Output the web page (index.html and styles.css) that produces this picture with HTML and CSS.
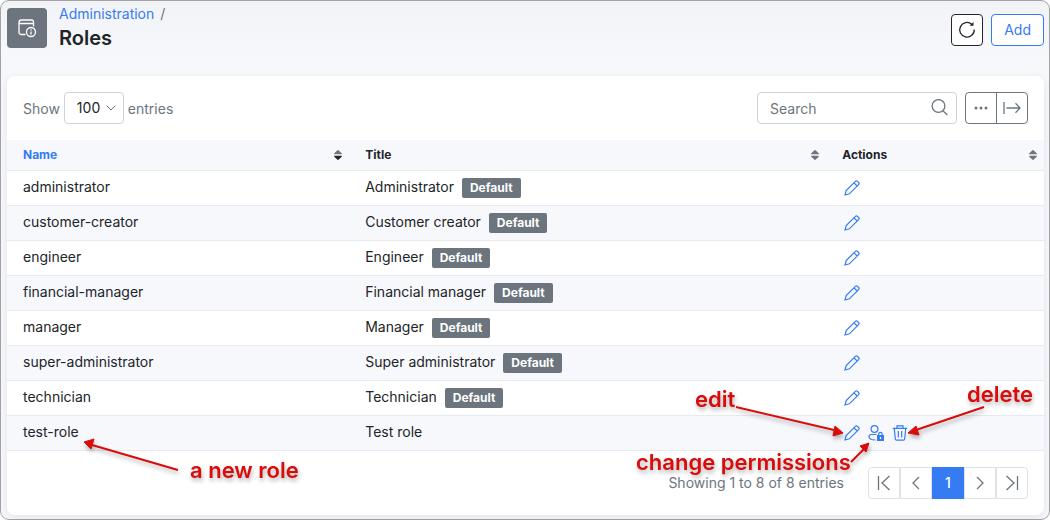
FILE: index.html
```html
<!DOCTYPE html>
<html lang="en">
<head>
  <meta charset="UTF-8" />
  <meta name="viewport" content="width=device-width, initial-scale=1" />
  <title>Roles</title>

  <link rel="stylesheet" href="styles.css">
</head>
<body>

  <!-- Shared icons -->
  <svg class="icon-defs" aria-hidden="true">
    <symbol id="icon-edit" viewBox="0 0 16 16">
      <path d="M1 15l1.200-4.400L11.400 1.400a1.500 1.500 0 0 1 2.100 0l1.100 1.100a1.500 1.500 0 0 1 0 2.100L5.400 13.800zM10 2.800l3.200 3.200" />
    </symbol>
    <symbol id="icon-sort" viewBox="0 0 8 10">
      <path class="sort-up" d="M.7 4.200a.5.500 0 0 1-.4-.9L3.200.5a1.100 1.100 0 0 1 1.600 0l2.900 2.800a.5.500 0 0 1-.4.9z" />
      <path class="sort-down" d="M.7 5.800a.5.500 0 0 0-.4.9l2.900 2.800a1.100 1.100 0 0 0 1.600 0l2.900-2.800a.5.500 0 0 0-.4-.9z" />
    </symbol>
  </svg>

  <div class="page">
    <header class="page-header">
      <div class="page-icon">
        <svg width="20" height="20" viewBox="0 0 20 20" aria-hidden="true">
          <path d="M8.500 16.500H4A2 2 0 0 1 2 14.500V4.500A2.500 2.500 0 0 1 4.500 2h10A2 2 0 0 1 16.500 4v4.500M2 5.500h14.500" />
          <circle cx="14" cy="14" r="4.500" />
          <path d="M14 13.500v3M14 11.300v1.200" />
        </svg>
      </div>
      <div class="page-heading">
        <nav class="breadcrumb" aria-label="Breadcrumb"><a href="#">Administration</a> <span>/</span></nav>
        <h1>Roles</h1>
      </div>
      <div class="header-actions">
        <button type="button" class="btn btn-refresh" aria-label="Refresh">
          <svg width="18" height="18" viewBox="0 0 18 18" aria-hidden="true">
            <path d="M13.700 3.200A7.300 7.300 0 1 0 16.300 8.500" />
            <path class="solid" d="M11.500 4.800h4V1z" />
          </svg>
        </button>
        <button type="button" class="btn btn-add">Add</button>
      </div>
    </header>

    <main class="card">
      <div class="toolbar">
        <div class="length">
          <label for="pageLength">Show</label>
          <div class="select-wrap">
            <select id="pageLength">
              <option>25</option>
              <option>50</option>
              <option selected>100</option>
            </select>
            <svg width="10" height="6" viewBox="0 0 10 6" aria-hidden="true"><path d="M.7.7L5 5 9.300.7" /></svg>
          </div>
          <span>entries</span>
        </div>
        <div class="tools">
          <div class="search">
            <input type="text" placeholder="Search" aria-label="Search" />
            <svg width="17" height="17" viewBox="0 0 17 17" aria-hidden="true"><circle cx="7.500" cy="7" r="6.400" /><path d="M12 11.700l4.300 4.300" /></svg>
          </div>
          <div class="btn-group">
            <button type="button" aria-label="More">
              <svg width="14" height="4" viewBox="0 0 14 4" aria-hidden="true"><circle cx="2" cy="2" r="1.500" /><circle cx="7" cy="2" r="1.500" /><circle cx="12" cy="2" r="1.500" /></svg>
            </button>
            <button type="button" aria-label="Export">
              <svg width="18" height="12" viewBox="0 0 18 12" aria-hidden="true"><path d="M1 0v12M3.500 6H17M12.500 1.200L17 6l-4.500 4.800" /></svg>
            </button>
          </div>
        </div>
      </div>

      <table class="roles">
        <thead>
          <tr>
            <th class="col-name sorted"><div>Name <svg class="sort"><use href="#icon-sort" /></svg></div></th>
            <th class="col-title"><div>Title <svg class="sort"><use href="#icon-sort" /></svg></div></th>
            <th class="col-actions"><div>Actions <svg class="sort"><use href="#icon-sort" /></svg></div></th>
          </tr>
        </thead>
        <tbody>
          <tr>
            <td>administrator</td>
            <td>Administrator <span class="badge">Default</span></td>
            <td><div class="row-actions"><a href="#" aria-label="Edit"><svg><use href="#icon-edit" /></svg></a></div></td>
          </tr>
          <tr>
            <td>customer-creator</td>
            <td>Customer creator <span class="badge">Default</span></td>
            <td><div class="row-actions"><a href="#" aria-label="Edit"><svg><use href="#icon-edit" /></svg></a></div></td>
          </tr>
          <tr>
            <td>engineer</td>
            <td>Engineer <span class="badge">Default</span></td>
            <td><div class="row-actions"><a href="#" aria-label="Edit"><svg><use href="#icon-edit" /></svg></a></div></td>
          </tr>
          <tr>
            <td>financial-manager</td>
            <td>Financial manager <span class="badge">Default</span></td>
            <td><div class="row-actions"><a href="#" aria-label="Edit"><svg><use href="#icon-edit" /></svg></a></div></td>
          </tr>
          <tr>
            <td>manager</td>
            <td>Manager <span class="badge">Default</span></td>
            <td><div class="row-actions"><a href="#" aria-label="Edit"><svg><use href="#icon-edit" /></svg></a></div></td>
          </tr>
          <tr>
            <td>super-administrator</td>
            <td>Super administrator <span class="badge">Default</span></td>
            <td><div class="row-actions"><a href="#" aria-label="Edit"><svg><use href="#icon-edit" /></svg></a></div></td>
          </tr>
          <tr>
            <td>technician</td>
            <td>Technician <span class="badge">Default</span></td>
            <td><div class="row-actions"><a href="#" aria-label="Edit"><svg><use href="#icon-edit" /></svg></a></div></td>
          </tr>
          <tr>
            <td>test-role</td>
            <td>Test role</td>
            <td>
              <div class="row-actions">
                <a href="#" aria-label="Edit"><svg><use href="#icon-edit" /></svg></a>
                <a href="#" aria-label="Change permissions">
                  <svg viewBox="0 0 16 16">
                    <circle cx="6.500" cy="4" r="3.400" />
                    <path d="M8.500 9.500H3a2 2 0 0 0-2 2C1 14 3.500 15 7.500 15" />
                    <path d="M10.700 10.500V9a1.700 1.700 0 0 1 3.400 0v1.500" />
                    <path class="solid" d="M9 10h7v6H9z" />
                    <path class="keyhole" d="M12.500 12v2" />
                  </svg>
                </a>
                <a href="#" aria-label="Delete">
                  <svg viewBox="0 0 16 16"><path d="M.8 3.300h14.400M5 3V.8h6V3M2.300 3.500l1 10.500a1.300 1.300 0 0 0 1.300 1.200h6.800a1.300 1.300 0 0 0 1.300-1.200l1-10.500M6.300 6v6.500M9.700 6v6.500" /></svg>
                </a>
              </div>
            </td>
          </tr>
        </tbody>
      </table>

      <footer class="table-footer">
        <span>Showing 1 to 8 of 8 entries</span>
        <nav class="pagination" aria-label="Pagination">
          <button type="button" aria-label="First page"><svg width="14" height="16" viewBox="0 0 14 16"><path d="M1.500 1v14M12.500 1L5 8l7.500 7" /></svg></button>
          <button type="button" aria-label="Previous page"><svg width="14" height="16" viewBox="0 0 14 16"><path d="M10 2L4 8l6 6" /></svg></button>
          <button type="button" class="active" aria-current="page">1</button>
          <button type="button" aria-label="Next page"><svg width="14" height="16" viewBox="0 0 14 16"><path d="M4 2l6 6-6 6" /></svg></button>
          <button type="button" aria-label="Last page"><svg width="14" height="16" viewBox="0 0 14 16"><path d="M12.500 1v14M1.500 1L9 8l-7.500 7" /></svg></button>
        </nav>
      </footer>
    </main>

    <!-- Callouts over the table -->
    <svg class="callout callout-left" width="320" height="140" viewBox="0 380 320 140">
      <path class="line" d="M178 470L92 445" />
      <path class="head" d="M84 442l10-3-3 10z" />
      <text x="190" y="478">a new role</text>
    </svg>
    <svg class="callout callout-right" width="430" height="140" viewBox="620 380 430 140">
      <path class="line" d="M736 407l98 23M984 407l-68 23M851 462l13-13" />
      <path class="head" d="M843 433l-10 3 2-10zM908 433l8-7 3 9zM869 443l-3 9-6-6z" />
      <text x="695" y="407">edit</text>
      <text x="967" y="402">delete</text>
      <text x="636" y="470">change permissions</text>
    </svg>
  </div>

</body>
</html>
```

FILE: styles.css
```css
/* Base */
* {
  box-sizing: border-box;
}
body {
  margin: 0;
  font-family: Inter, "Liberation Sans", sans-serif;
  font-size: 14px;
  line-height: 20px;
  color: #212529;
  background: #fff;
}
a {
  color: #357bf2;
  text-decoration: none;
}
button, input, select {
  font: inherit;
}
svg {
  fill: none;
  stroke: currentColor;
  flex-shrink: 0;
}
.icon-defs {
  position: absolute;
  width: 0;
  height: 0;
}
.page {
  position: relative;
  min-height: 100vh;
  padding: 4px 5px 4px 6px;
  border: 1px solid #a3a3a3;
  border-radius: 9px;
  background: linear-gradient(#f2f3f7, #f7f8fc 60px);
}

/* Page header */
.page-header {
  display: flex;
  align-items: flex-start;
  gap: 12px;
  padding-bottom: 24px;
}
.page-icon {
  display: flex;
  align-items: center;
  justify-content: center;
  width: 40px;
  height: 40px;
  margin-top: 3px;
  border-radius: 4px;
  background: #6c757d;
  color: #fff;
}
.page-icon svg {
  stroke-width: 1.3;
}
.page-heading {
  flex-grow: 1;
}
.breadcrumb {
  height: 20px;
  line-height: 18px;
  color: #6c757d;
}
.breadcrumb span {
  margin-left: 2px;
}
h1 {
  margin: 0;
  font-size: 20px;
  line-height: 27px;
  font-weight: 600;
}
.header-actions {
  display: flex;
  gap: 8px;
  margin-top: 9px;
}
.btn {
  display: flex;
  align-items: center;
  justify-content: center;
  height: 32px;
  padding: 0 12px;
  border: 1px solid #357bf2;
  border-radius: 4px;
  background: #fff;
  color: #357bf2;
  cursor: pointer;
}
.btn-refresh {
  width: 32px;
  padding: 0;
  border-color: #212529;
  color: #212529;
}
.btn-refresh svg {
  stroke-width: 1.3;
}
.solid {
  fill: currentColor;
  stroke: none;
}

/* Card and toolbar */
.card {
  border-radius: 8px;
  background: #fff;
  box-shadow: 0 2px 8px rgba(50, 50, 93, 0.1);
}
.toolbar {
  display: flex;
  justify-content: space-between;
  padding: 16px;
}
.length {
  display: flex;
  align-items: center;
  gap: 4px;
  color: #6c757d;
}
.length label,
.length > span {
  padding-top: 2px;
}
.select-wrap {
  position: relative;
}
.select-wrap select {
  appearance: none;
  width: 60px;
  height: 32px;
  padding: 0 12px;
  border: 1px solid #ced4da;
  border-radius: 4px;
  background: #fff;
  color: #212529;
}
.select-wrap svg {
  position: absolute;
  top: 13px;
  right: 8px;
  pointer-events: none;
}
.tools {
  display: flex;
  gap: 8px;
}
.search {
  position: relative;
}
.search input {
  width: 200px;
  height: 32px;
  padding: 0 36px 0 12px;
  border: 1px solid #ced4da;
  border-radius: 4px;
  background: #fff;
}
.search input::placeholder {
  color: #6c757d;
}
.search svg {
  position: absolute;
  top: 7px;
  right: 9px;
  color: #6c757d;
  stroke-width: 1.3;
}
.btn-group {
  display: flex;
  width: 63px;
  border: 1px solid #6c757d;
  border-radius: 4px;
}
.btn-group button {
  display: flex;
  flex: 1;
  align-items: center;
  justify-content: center;
  padding: 0;
  border: 0;
  background: none;
  color: #6c757d;
}
.btn-group button + button {
  border-left: 1px solid #6c757d;
}
.btn-group svg {
  stroke-width: 1.3;
}
.btn-group circle {
  fill: currentColor;
  stroke: none;
}

/* Roles table */
.roles {
  width: 100%;
  border-collapse: separate;
  border-spacing: 0;
  table-layout: fixed;
}
.col-name {
  width: 33%;
}
.col-title {
  width: 46%;
}
.roles th {
  height: 31px;
  padding: 0 7px 0 16px;
  border-bottom: 1px solid #e6e9ee;
  background: #f7f8fc;
  font-size: 12px;
  font-weight: 700;
}
.roles th div {
  display: flex;
  align-items: center;
  justify-content: space-between;
}
.roles th.sorted {
  color: #357bf2;
}
.sort {
  width: 8px;
  height: 10px;
  fill: #6c757d;
  stroke: none;
}
.sorted .sort {
  fill: #212529;
}
.sort-up {
  fill: #6c757d;
}
.roles td {
  height: 35px;
  padding: 0 16px 2px;
  border-bottom: 1px solid #e6e9ee;
}
.roles td:last-child {
  padding-bottom: 0;
}
.roles tbody tr:nth-child(even) {
  background: #f7f8fc;
}
.badge {
  display: inline-block;
  margin-left: 4px;
  padding: 0 8px;
  border-radius: 2px;
  background: #6c757d;
  color: #fff;
  font-size: 12px;
  font-weight: 700;
}
.row-actions {
  display: flex;
  gap: 8px;
  padding-left: 2px;
}
.row-actions a {
  display: flex;
}
.row-actions svg {
  width: 16px;
  height: 16px;
  stroke-width: 1.2;
}
.row-actions .keyhole {
  stroke: #fff;
}

/* Footer */
.table-footer {
  display: flex;
  align-items: center;
  justify-content: flex-end;
  gap: 24px;
  padding: 16px;
  color: #6c757d;
}
.pagination {
  display: flex;
}
.pagination button {
  display: flex;
  align-items: center;
  justify-content: center;
  width: 32px;
  height: 32px;
  padding: 0;
  border: 1px solid #dee2e6;
  background: #fff;
  color: #6c757d;
}
.pagination svg {
  stroke-width: 1.3;
}
.pagination button:first-child {
  border-radius: 4px 0 0 4px;
}
.pagination button:last-child {
  border-radius: 0 4px 4px 0;
}
.pagination button.active {
  border-color: #357bf2;
  background: #357bf2;
  color: #fff;
  font-weight: 500;
}

/* Callouts */
.callout {
  position: absolute;
  top: 379px;
  pointer-events: none;
  filter: drop-shadow(1px 3px 2px rgba(0, 0, 0, 0.3));
}
.callout-left {
  left: -1px;
}
.callout-right {
  right: -1px;
}
.callout .line {
  stroke: #d90b0b;
  stroke-width: 2;
}
.callout .head {
  fill: #d90b0b;
  stroke: #d90b0b;
}
.callout text {
  fill: #d90b0b;
  stroke: none;
  font-size: 22px;
  font-weight: 600;
}
```
